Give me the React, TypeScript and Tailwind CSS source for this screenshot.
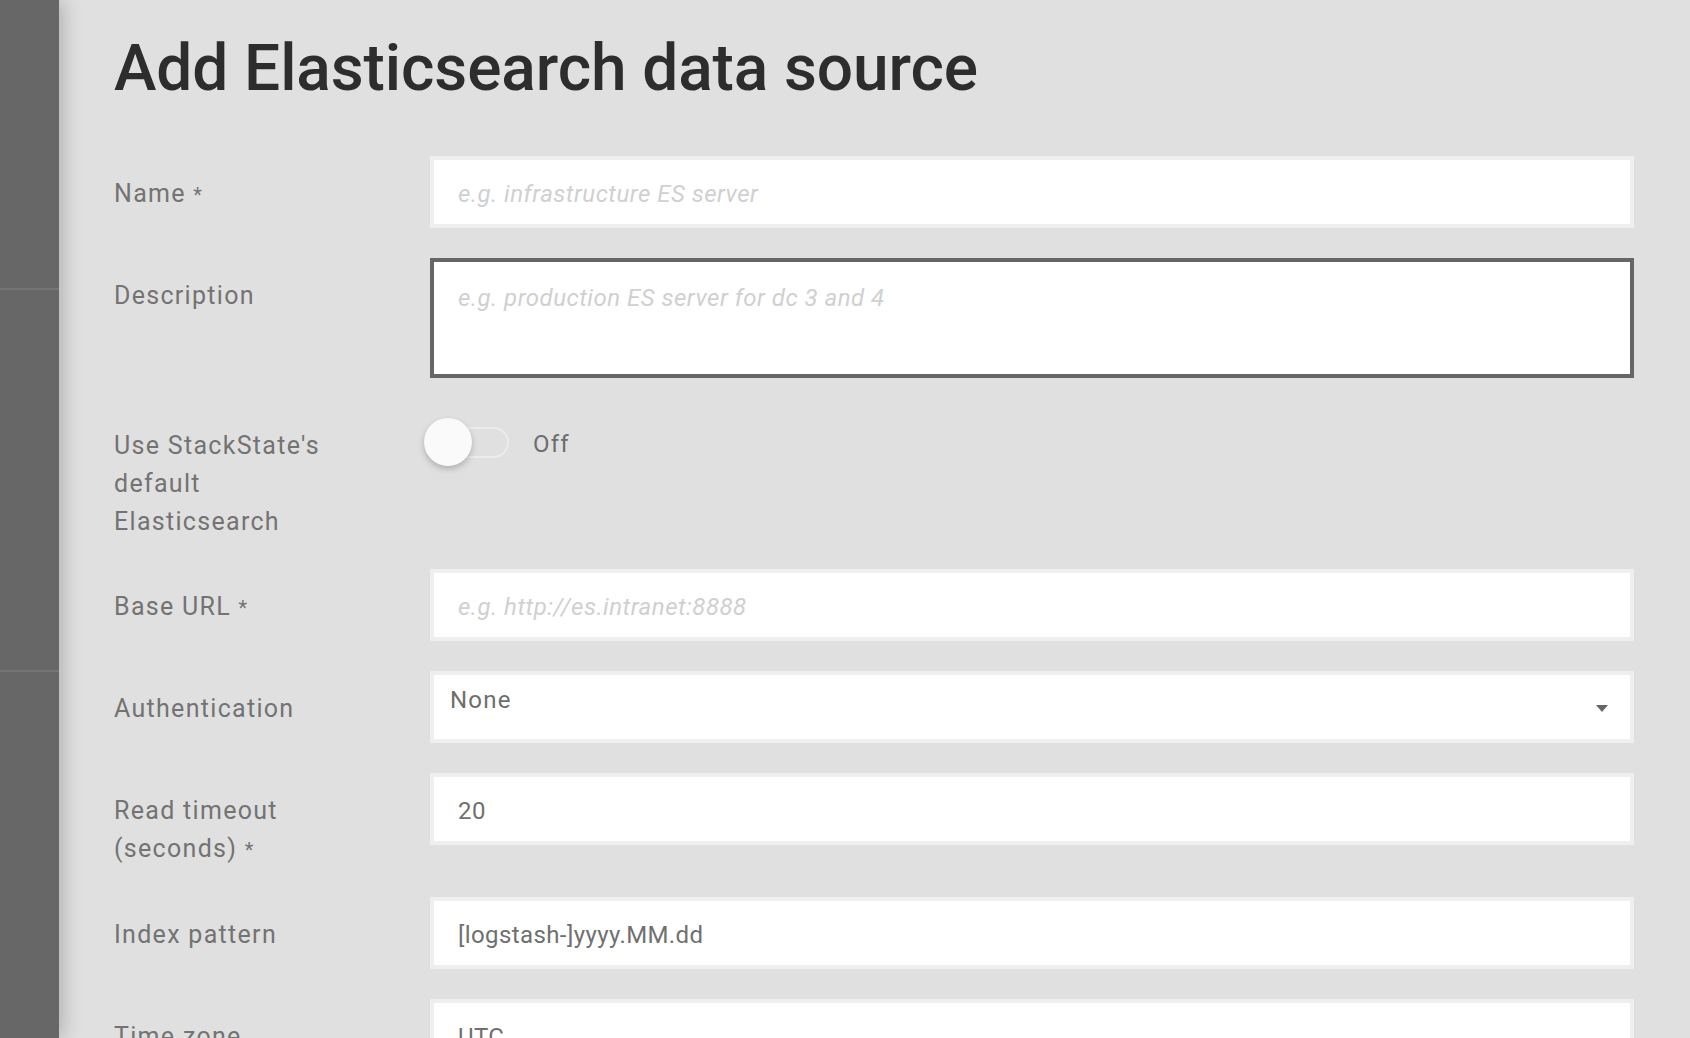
import React from 'react';

const labelCls = 'w-[316px] shrink-0 pt-[17px] pr-6 text-[25px] leading-[38px] tracking-[1.3px] text-[#737373]';
const boxCls = 'h-[72px] w-full border-4 border-[#efefef] bg-white px-[24px] pt-[4px] text-[24px] text-[#707070] outline-none';

const Row = ({ label, children }: { label: React.ReactNode; children: React.ReactNode }) => (
  <div className="mb-[30px] flex">
    <div className={labelCls}>
      <div className="relative top-[2px]">{label}</div>
    </div>
    <div className="flex-1">{children}</div>
  </div>
);

const TextInput = ({ placeholder, value }: { placeholder?: string; value?: string }) => (
  <div className={`${boxCls} flex items-center`}>
    {value ? (
      <span className="tracking-[0.4px]">{value}</span>
    ) : (
      <span className="italic tracking-[0.5px] text-[#d0d0d0]">{placeholder}</span>
    )}
  </div>
);

const App = () => {
  return (
    <div className="flex h-[1038px] w-full overflow-hidden bg-[#e0e0e0] font-['Roboto',sans-serif]">
      {/* Left rail */}
      <div className="relative z-10 flex w-[59px] shrink-0 flex-col bg-[#676767] shadow-[4px_0_18px_rgba(0,0,0,0.22)]">
        <div className="h-[288px]" />
        <div className="h-[2px] bg-[#757575]" />
        <div className="h-[380px]" />
        <div className="h-[2px] bg-[#757575]" />
      </div>

      {/* Form */}
      <div className="flex-1 pl-[55px] pr-[56px] pt-[37px]">
        <h1 className="mb-[55px] text-[64px] font-medium leading-[64px] tracking-[-0.1px] text-[#2d2d2d]">
          Add Elasticsearch data source
        </h1>

        <Row label={<>Name <span className="text-[20px]">*</span></>}>
          <TextInput placeholder="e.g. infrastructure ES server" />
        </Row>

        <Row label="Description">
          <div className="h-[120px] w-full border-4 border-[#666666] bg-white px-[24px] pt-[17px] text-[24px] leading-[38px]">
            <span className="italic tracking-[0.5px] text-[#d0d0d0]">e.g. production ES server for dc 3 and 4</span>
          </div>
        </Row>

        <Row label={<>Use StackState's<br />default<br />Elasticsearch</>}>
          <div className="flex h-[68px] items-center">
            <div className="relative ml-[2px] h-[31px] w-[77px] rounded-full border-2 border-[#ececec]">
              <div className="absolute left-[-10px] top-[-10.5px] h-[48px] w-[48px] rounded-full bg-[#fafafa] shadow-[0_3px_6px_rgba(0,0,0,0.22)]" />
            </div>
            <span className="ml-[24px] pt-[4px] text-[24px] tracking-[1.2px] text-[#6e6e6e]">Off</span>
          </div>
        </Row>

        <Row label={<>Base URL <span className="text-[20px]">*</span></>}>
          <TextInput placeholder="e.g. http://es.intranet:8888" />
        </Row>

        <Row label="Authentication">
          <div className="relative flex h-[72px] w-full items-center border-4 border-[#efefef] bg-white pb-[14px] pl-[16px] text-[24px] text-[#6e6e6e]">
            <span className="tracking-[1.2px]">None</span>
            <svg className="absolute right-[22px] top-[30px]" width="12" height="7" viewBox="0 0 12 7">
              <path d="M0 0h12L6 7z" fill="#666666" />
            </svg>
          </div>
        </Row>

        <Row label={<>Read timeout<br />(seconds) <span className="text-[20px]">*</span></>}>
          <TextInput value="20" />
        </Row>

        <Row label="Index pattern">
          <TextInput value="[logstash-]yyyy.MM.dd" />
        </Row>

        <Row label="Time zone">
          <TextInput value="UTC" />
        </Row>
      </div>
    </div>
  );
};

export default App;
